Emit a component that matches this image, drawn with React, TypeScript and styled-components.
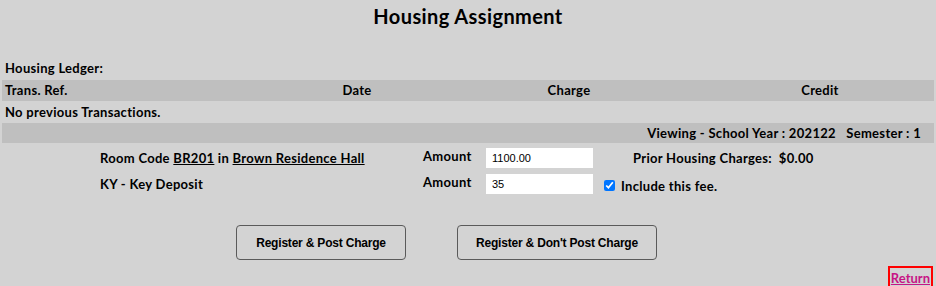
import * as React from 'react';
import styled, { createGlobalStyle } from 'styled-components';

const GlobalStyle = createGlobalStyle`
  body {
    margin: 0;
    background: #d3d3d3;
    font-family: Lato, 'DejaVu Sans', sans-serif;
    letter-spacing: 0.3px;
    color: #000;
  }
`;

const Page = styled.div`
  padding: 0 2px;
  width: 936px;
  box-sizing: border-box;
`;

const Title = styled.h1`
  margin: 0;
  height: 34px;
  padding-top: 4px;
  box-sizing: border-box;
  text-align: center;
  font-size: 20px;
  letter-spacing: 0.4px;
  line-height: 24px;
  font-weight: 700;
`;

const LedgerLabel = styled.div`
  margin-top: 24px;
  padding-left: 3px;
  height: 21px;
  line-height: 21px;
  font-size: 13px;
  font-weight: 700;
  margin-bottom: 1px;
`;

const Bar = styled.div<{ $height: number }>`
  background: #bfbfbf;
  height: ${({ $height }) => $height}px;
  line-height: ${({ $height }) => $height}px;
  font-size: 13px;
  font-weight: 700;
`;

const HeadRow = styled(Bar)`
  display: grid;
  grid-template-columns: 280px 150px 274px 1fr;
`;

const HeadCell = styled.div<{ $left?: boolean }>`
  text-align: ${({ $left }) => ($left ? 'left' : 'center')};
  padding-left: ${({ $left }) => ($left ? '3px' : '0')};
`;

const EmptyRow = styled.div`
  height: 22px;
  line-height: 22px;
  padding-left: 3px;
  font-size: 13px;
  font-weight: 700;
`;

const ViewingBar = styled(Bar)`
  text-align: right;
  padding-right: 13px;
  white-space: pre;
`;

const Form = styled.div`
  margin-top: 2px;
  padding-left: 98px;
  display: grid;
  grid-template-columns: 323px 63px 118px auto;
  grid-auto-rows: 26px;
  align-items: center;
  font-size: 13px;
  font-weight: 700;
`;

const Label = styled.div``;

const LinkText = styled.span`
  text-decoration: underline;
`;

const AmountLabel = styled.div`
  padding-bottom: 4px;
`;

const AmountInput = styled.input`
  width: 107px;
  height: 20px;
  box-sizing: border-box;
  border: none;
  outline: none;
  background: #fff;
  padding: 0 6px;
  font-family: 'Liberation Sans', Arial, sans-serif;
  font-size: 11px;
  letter-spacing: 0;
  color: #000;
`;

const Prior = styled.div`
  padding-left: 29px;
  white-space: pre;
`;

const FeeCheck = styled.label`
  display: flex;
  align-items: center;
  gap: 6px;
  padding-top: 3px;

  input {
    margin: 0;
    width: 11px;
    height: 11px;
  }
`;

const Buttons = styled.div`
  margin-top: 28px;
  padding-left: 234px;
  display: flex;
  gap: 51px;
`;

const Button = styled.button<{ $width: number }>`
  width: ${({ $width }) => $width}px;
  height: 35px;
  background: transparent;
  border: 1px solid #5a5a5a;
  border-radius: 4px;
  font-family: 'Liberation Sans', Arial, sans-serif;
  font-size: 12px;
  font-weight: 700;
  letter-spacing: -0.2px;
  color: #000;
  padding: 0;
`;

const Footer = styled.div`
  margin-top: 6px;
  display: flex;
  justify-content: flex-end;
  padding-right: 1px;
`;

const ReturnLink = styled.a`
  display: inline-block;
  border: 2px solid #ff0000;
  padding: 1px 1px;
  height: 23px;
  box-sizing: border-box;
  line-height: 18px;
  font-size: 13px;
  letter-spacing: 0;
  font-weight: 700;
  color: #c71585;
  text-decoration: underline;
`;

const App = () => {
  return (
    <Page>
      <GlobalStyle />
      <Title>Housing Assignment</Title>
      <LedgerLabel>Housing Ledger:</LedgerLabel>
      <HeadRow $height={21}>
        <HeadCell $left>Trans. Ref.</HeadCell>
        <HeadCell>Date</HeadCell>
        <HeadCell>Charge</HeadCell>
        <HeadCell>Credit</HeadCell>
      </HeadRow>
      <EmptyRow>No previous Transactions.</EmptyRow>
      <ViewingBar $height={20}>
        {'Viewing - School Year : 202122   Semester : 1'}
      </ViewingBar>
      <Form>
        <Label>
          Room Code <LinkText>BR201</LinkText> in{' '}
          <LinkText>Brown Residence Hall</LinkText>
        </Label>
        <AmountLabel>Amount</AmountLabel>
        <AmountInput defaultValue="1100.00" />
        <Prior>{'Prior Housing Charges:  $0.00'}</Prior>
        <Label>KY - Key Deposit</Label>
        <AmountLabel>Amount</AmountLabel>
        <AmountInput defaultValue="35" />
        <FeeCheck>
          <input type="checkbox" defaultChecked />
          Include this fee.
        </FeeCheck>
      </Form>
      <Buttons>
        <Button $width={170}>Register &amp; Post Charge</Button>
        <Button $width={200}>Register &amp; Don't Post Charge</Button>
      </Buttons>
      <Footer>
        <ReturnLink href="#">Return</ReturnLink>
      </Footer>
    </Page>
  );
};

export default App;
